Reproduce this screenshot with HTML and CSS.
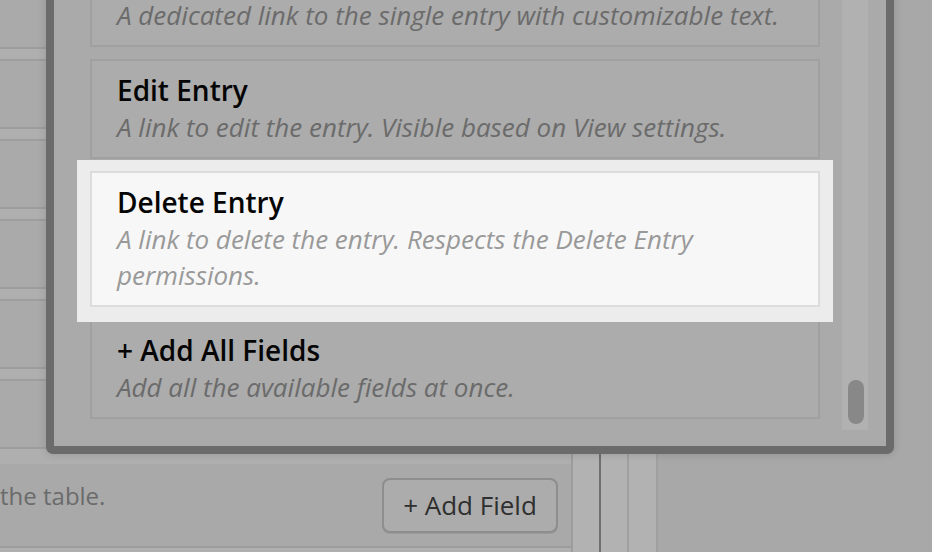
FILE: index.html
```html
<!DOCTYPE html>
<html lang="en">
<head>
<meta charset="utf-8">
<title>Add Field</title>
<link rel="stylesheet" href="styles.css">
</head>
<body>
<div class="page">
  <div class="main">
    <div class="rows">
      <div class="row"></div>
      <div class="row"></div>
      <div class="row"></div>
      <div class="row"></div>
      <div class="row"></div>
      <div class="row"></div>
    </div>
    <div class="footer">
      <p class="hint">the table.</p>
      <button class="btn" type="button">+ Add Field</button>
    </div>
  </div>
  <div class="col col-a"></div>
  <div class="rule"></div>
  <div class="col col-b"></div>
  <div class="col col-c"></div>
</div>

<div class="modal">
  <div class="list">
    <div class="card">
      <div class="title">Link to Single Entry</div>
      <div class="desc">A dedicated link to the single entry with customizable text.</div>
    </div>
    <div class="card">
      <div class="title">Edit Entry</div>
      <div class="desc">A link to edit the entry. Visible based on View settings.</div>
    </div>
    <div class="card active">
      <div class="title">Delete Entry</div>
      <div class="desc">A link to delete the entry. Respects the Delete Entry permissions.</div>
    </div>
    <div class="card">
      <div class="title">+ Add All Fields</div>
      <div class="desc">Add all the available fields at once.</div>
    </div>
  </div>
  <div class="scroll"><div class="thumb"></div></div>
</div>
</body>
</html>
```
FILE: styles.css
```css
html, body {
  margin: 0;
  padding: 0;
}
body {
  width: 932px;
  height: 552px;
  overflow: hidden;
  position: relative;
  background: #a8a8a8;
  font-family: "Open Sans", "Noto Sans", sans-serif;
}

/* background page (dimmed) */
.page {
  display: flex;
  height: 552px;
}
.main {
  width: 573px;
  box-sizing: border-box;
  border-right: 2px solid #9c9c9c;
  background: #afafaf;
  display: flex;
  flex-direction: column;
}
.rows {
  display: flex;
  flex-direction: column;
  gap: 10px;
  margin-top: -21px;
  margin-bottom: 15px;
}
.row {
  height: 70px;
  box-sizing: border-box;
  background: #aaaaaa;
  border-top: 2px solid #9d9d9d;
  border-bottom: 2px solid #9d9d9d;
}
.footer {
  height: 84px;
  box-sizing: border-box;
  background: #a9a9a9;
  border-bottom: 2px solid #9d9d9d;
  display: flex;
  justify-content: space-between;
  align-items: flex-start;
  padding: 14px 13px 0 0;
}
.hint {
  margin: 1px 0 0 0;
  font-size: 24px;
  line-height: 33px;
  color: #6b6b6b;
}
.btn {
  width: 176px;
  height: 55px;
  box-sizing: border-box;
  border: 2px solid #8e8e8e;
  border-radius: 8px;
  background: #acacac;
  box-shadow: 0 1px 0 #9a9a9a;
  font-family: "Open Sans", "Noto Sans", sans-serif;
  font-size: 26px;
  line-height: 51px;
  color: #2f2f2f;
  padding: 0 18px;
  margin: 0;
}
.col {
  background: #b2b2b2;
}
.col-a { width: 26px; }
.rule { width: 2px; background: #6f6f6f; }
.col-b { width: 26px; border-right: 2px solid #a0a0a0; }
.col-c { width: 27px; border-right: 2px solid #a0a0a0; }

/* modal over the page */
.modal {
  position: absolute;
  left: 46px;
  top: -160px;
  width: 848px;
  height: 614px;
  box-sizing: border-box;
  border: 8px solid #6b6b6b;
  border-radius: 7px;
  background: #aaaaaa;
  box-shadow: 0 0 10px rgba(0, 0, 0, 0.14);
  display: flex;
  z-index: 5;
}
.list {
  width: 730px;
  padding: 0 0 27px 36px;
  display: flex;
  flex-direction: column;
  justify-content: flex-end;
  gap: 12px;
}
.card {
  box-sizing: border-box;
  border: 2px solid #a0a0a0;
  background: #acacac;
  padding: 10px 25px 12px 25px;
}
.title {
  font-size: 28px;
  font-weight: 600;
  line-height: 38px;
  color: #050505;
}
.desc {
  font-size: 26px;
  font-style: italic;
  line-height: 36px;
  color: #6b6b6b;
}
.card.active {
  position: relative;
  z-index: 1;
  background: #f7f7f7;
  border-color: #dcdcdc;
  box-shadow: 0 2px 0 13px #ececec;
}
.card.active .desc {
  color: #999999;
}
.scroll {
  width: 26px;
  margin: 0 0 16px 22px;
  background: #b1b1b1;
  display: flex;
  flex-direction: column;
  justify-content: flex-end;
}
.thumb {
  width: 16px;
  height: 44px;
  margin: 0 0 6px 6px;
  border-radius: 8px;
  background: #888888;
}
```
